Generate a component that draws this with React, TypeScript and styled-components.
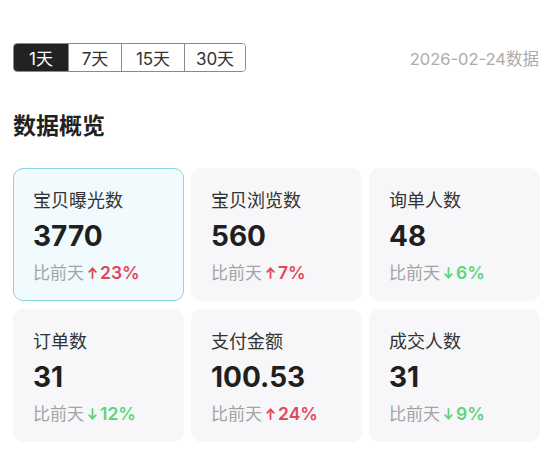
import React from "react";
import styled, { createGlobalStyle } from "styled-components";

const Global = createGlobalStyle`
  html, body { margin: 0; padding: 0; background: #ffffff; }
  body { font-family: "Inter", "Noto Sans CJK SC", sans-serif; }
`;

const Page = styled.div`
  width: 551px;
  height: 476px;
  box-sizing: border-box;
  padding: 43px 12px 0 13px;
  display: flex;
  flex-direction: column;
`;

const TopBar = styled.div`
  display: flex;
  align-items: center;
  justify-content: space-between;
`;

const Tabs = styled.div`
  display: flex;
  border: 1px solid #8a8a8a;
  border-radius: 4px;
  overflow: hidden;
  height: 29px;
  box-sizing: border-box;
`;

const Tab = styled.div<{ $active?: boolean; $w: number }>`
  width: ${(p) => p.$w}px;
  display: flex;
  align-items: center;
  justify-content: center;
  font-size: 17px;
  color: ${(p) => (p.$active ? "#ffffff" : "#333333")};
  background: ${(p) => (p.$active ? "#222222" : "#ffffff")};
  & + & { border-left: 1px solid #8a8a8a; }
`;

const DateText = styled.div`
  font-size: 16.5px;
  color: #ababab;
`;

const Heading = styled.h2`
  margin: 39px 0 0 0;
  font-size: 23px;
  font-weight: 700;
  color: #222222;
  line-height: 30px;
`;

const Grid = styled.div`
  margin-top: 27px;
  display: grid;
  grid-template-columns: 171px 171px 171px;
  grid-auto-rows: 133px;
  column-gap: 7px;
  row-gap: 8px;
`;

const Card = styled.div<{ $selected?: boolean }>`
  box-sizing: border-box;
  border-radius: 10px;
  padding: 20px 0 0 19px;
  background: ${(p) => (p.$selected ? "#f1fbfd" : "#f7f7f9")};
  border: 1px solid ${(p) => (p.$selected ? "#86d6e3" : "transparent")};
  display: flex;
  flex-direction: column;
`;

const Label = styled.div`
  font-size: 18px;
  color: #333333;
  line-height: 24px;
`;

const Value = styled.div`
  font-size: 28px;
  font-weight: 700;
  color: #1f1f1f;
  line-height: 36px;
  margin-top: 5px;
`;

const Compare = styled.div`
  margin-top: 7px;
  display: flex;
  align-items: center;
  font-size: 17px;
  color: #a3a3a3;
  line-height: 24px;
`;

const Change = styled.span<{ $up: boolean }>`
  display: inline-flex;
  align-items: center;
  margin-left: 4px;
  font-weight: 600;
  font-size: 17.5px;
  color: ${(p) => (p.$up ? "#e2485a" : "#5ed57a")};
  svg { margin-right: 3px; }
`;

const Arrow = ({ up }: { up: boolean }) => (
  <svg width="9" height="12" viewBox="0 0 9 12" fill="none" stroke="currentColor" strokeWidth="1.8" strokeLinecap="round" strokeLinejoin="round">
    {up ? (
      <>
        <path d="M4.5 11V1.5" />
        <path d="M1.2 4.8L4.5 1.5L7.8 4.8" />
      </>
    ) : (
      <>
        <path d="M4.5 1V10.5" />
        <path d="M1.2 7.2L4.5 10.5L7.8 7.2" />
      </>
    )}
  </svg>
);

const tabs = [
  { t: "1天", w: 54 },
  { t: "7天", w: 52 },
  { t: "15天", w: 62 },
  { t: "30天", w: 60 },
];

const metrics = [
  { label: "宝贝曝光数", value: "3770", up: true, pct: "23%", selected: true },
  { label: "宝贝浏览数", value: "560", up: true, pct: "7%" },
  { label: "询单人数", value: "48", up: false, pct: "6%" },
  { label: "订单数", value: "31", up: false, pct: "12%" },
  { label: "支付金额", value: "100.53", up: true, pct: "24%" },
  { label: "成交人数", value: "31", up: false, pct: "9%" },
];

export default function App() {
  return (
    <>
      <Global />
      <Page>
        <TopBar>
          <Tabs>
            {tabs.map((tab, i) => (
              <Tab key={tab.t} $active={i === 0} $w={tab.w}>
                {tab.t}
              </Tab>
            ))}
          </Tabs>
          <DateText>2026-02-24数据</DateText>
        </TopBar>
        <Heading>数据概览</Heading>
        <Grid>
          {metrics.map((m) => (
            <Card key={m.label} $selected={m.selected}>
              <Label>{m.label}</Label>
              <Value>{m.value}</Value>
              <Compare>
                比前天
                <Change $up={m.up}>
                  <Arrow up={m.up} />
                  {m.pct}
                </Change>
              </Compare>
            </Card>
          ))}
        </Grid>
      </Page>
    </>
  );
}
